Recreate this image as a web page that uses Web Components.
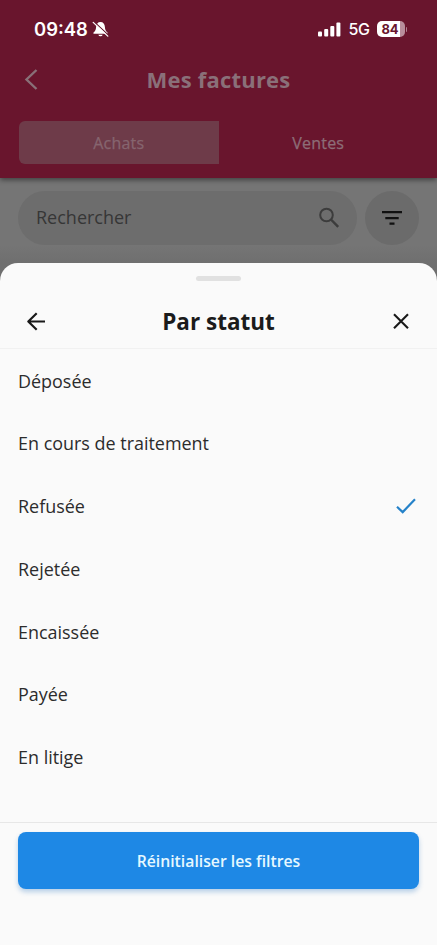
<!DOCTYPE html>
<html lang="fr">
<head>
<meta charset="utf-8">
<title>Mes factures</title>
<style>
html,body{margin:0;height:100%;background:#757575}
body{font-family:"Open Sans","Noto Sans",sans-serif;overflow:hidden}
</style>
</head>
<body>
<invoices-screen></invoices-screen>
<script>
function define(name, html){
  const t=document.createElement('template');
  t.innerHTML=html;
  customElements.define(name, class extends HTMLElement{
    constructor(){super();this.attachShadow({mode:'open'}).appendChild(t.content.cloneNode(true));}
  });
}

define('status-bar', `
<style>
:host{display:flex;align-items:center;box-sizing:border-box;height:58px;padding:0 30px 0 34px;color:#fff;font-family:Inter,sans-serif}
time{font-size:18.4px;font-weight:600;line-height:22px;letter-spacing:0}
svg{display:block;flex:none}
.bell{margin-left:4px}
.signal{margin-left:auto}
.net{font-size:16px;line-height:20px;margin:0 7px;font-weight:500;letter-spacing:-.4px}
.bat{box-sizing:border-box;width:28px;height:16px;border-radius:5px;background:linear-gradient(90deg,#fff 83%,#b88d9b 83%);color:#69152d;font-size:13px;font-weight:700;line-height:16px;padding-left:5px;letter-spacing:-.2px}
.tip{width:1.5px;height:5px;border-radius:0 2px 2px 0;background:#b08191;margin-left:1px}
</style>
<time>09:48</time>
<svg class="bell" width="17" height="17" viewBox="0 0 17 17"><path d="M8.5 1C5.7 1 4.3 3 4.1 6c-.2 2.700-.7 3.800-2.300 5.200-.8.800-.5 1.600.5 1.600h12.400c1 0 1.300-.8.500-1.600-1.600-1.400-2.100-2.500-2.300-5.200C12.700 3 11.300 1 8.500 1zM6.300 13.700a2.300 2.300 0 0 0 4.400 0z" fill="#fff"/><path d="M2 .6 16.400 14.100" stroke="#69152d" stroke-width="1.300"/><path d="M1.200 1.400 15.800 15.100" stroke="#fff" stroke-width="1.300" stroke-linecap="round"/></svg>
<svg class="signal" width="23" height="15" viewBox="0 0 23 15" fill="#fff"><rect x="0" y="9.500" width="4" height="5" rx="1"/><rect x="6.200" y="7" width="4" height="7.500" rx="1"/><rect x="12.300" y="4" width="4" height="10.500" rx="1"/><rect x="18.400" y=".5" width="4" height="14" rx="1"/></svg>
<span class="net">5G</span><span class="bat">84</span><span class="tip"></span>`);

define('app-header', `
<style>
:host{display:block;height:178px;background:#69152d;box-shadow:0 2px 5px rgba(0,0,0,.45);position:relative}
.title{display:grid;grid-template-columns:62px 1fr 62px;align-items:center;height:44px}
h1{margin:0;padding-bottom:2px;text-align:center;font-size:22px;line-height:30px;font-weight:700;letter-spacing:.2px;color:#8a7079}
svg{display:block;margin-left:24px}
</style>
<status-bar></status-bar>
<div class="title"><svg width="16" height="24" viewBox="0 0 16 24"><path d="M12.500 2 2.500 11.500l10 9.500" fill="none" stroke="#897078" stroke-width="2.400"/></svg><h1>Mes factures</h1></div>
<slot></slot>`);

define('tab-strip', `
<style>
:host{display:grid;grid-template-columns:1fr 1fr;height:43px;margin:19px 19px 0;border-radius:6px;overflow:hidden}
::slotted(span){display:flex;align-items:center;justify-content:center;font-size:16px;-webkit-text-stroke:.25px currentColor;line-height:22px;letter-spacing:.2px;color:#8d6d77}
::slotted(.active){background:#6e3b49;color:#86656f}
</style><slot></slot>`);

define('search-row', `
<style>
:host{display:flex;gap:8px;padding:13px 18px 0}
.field{display:flex;align-items:center;justify-content:space-between;box-sizing:border-box;width:339px;height:54px;border-radius:27px;background:#6d6d6d;padding:0 16px 0 18px;color:#363636;font-size:18px;line-height:24px}
.round{display:grid;place-items:center;width:54px;height:54px;border-radius:50%;background:#6b6b6b}
.field span{padding-bottom:2px}
svg{display:block}
</style>
<div class="field"><span><slot></slot></span><svg width="24" height="24" viewBox="0 0 24 24" fill="none" stroke="#3c3c3c" stroke-width="2"><circle cx="9.500" cy="9" r="6.300"/><path d="m14 13.500 7.200 7.400" stroke-width="2.500"/></svg></div>
<div class="round"><svg width="22" height="16" viewBox="0 0 22 16" fill="#111"><path d="M1 1h20v2.300H1zM4.300 7h13.400v2.300H4.300zM8.500 12.500h5v2.300h-5z"/></svg></div>`);

define('filter-sheet', `
<style>
:host{display:flex;flex-direction:column;position:absolute;left:0;right:0;top:263px;bottom:0;background:#fafafa;border-radius:18px 18px 0 0;color:#202020}
.grip{width:45px;height:5px;border-radius:3px;background:#e1e1e1;margin:13px auto 0}
header{display:grid;grid-template-columns:24px 1fr 24px;align-items:center;box-sizing:border-box;height:68px;padding:13px 24px 0;border-bottom:1px solid #f1f1f1}
h2{margin:0;padding-top:1px;text-align:center;font-size:22.500px;line-height:30px;font-weight:700;color:#1b1b1b}
svg{display:block}
.list{box-sizing:border-box;height:473px;padding-top:.3px}
footer{border-top:1px solid #e7e7e7;padding:9px 18px 0}
</style>
<div class="grip"></div>
<header><svg width="24" height="24" viewBox="0 0 24 24" fill="none" stroke="#191919" stroke-width="2.200" stroke-linejoin="round"><path d="M21 12.500H4.500M12.700 4.300 4.300 12.500l8.400 8.200"/></svg><h2><slot name="title"></slot></h2><svg width="24" height="24" viewBox="0 0 24 24" fill="none" stroke="#191919" stroke-width="2.100"><path d="m5 5.300 14 14M19 5.300 5 19.300"/></svg></header>
<div class="list"><slot></slot></div>
<footer><slot name="action"></slot></footer>`);

define('status-option', `
<style>
:host{display:flex;align-items:center;justify-content:space-between;height:62.750px;padding:0 20px 0 18px;font-size:17.950px;line-height:26px;color:#2c2c2c}
svg{display:none}
:host([selected]) svg{display:block}
</style>
<span><slot></slot></span><svg width="22" height="18" viewBox="0 0 22 18"><path d="m2 9.800 5.700 5.300L20 2.300" fill="none" stroke="#2582c9" stroke-width="2.200"/></svg>`);

define('primary-button', `
<style>
:host{display:block}
button{display:block;width:100%;height:57px;border:0;border-radius:8px;background:#1e88e5;color:#e6f8ff;font:600 15.750px/22px "Open Sans","Noto Sans",sans-serif;box-shadow:0 3px 5px rgba(30,110,190,.3);padding:0}
</style><button><slot></slot></button>`);

define('invoices-screen', `
<style>
:host{display:block;position:relative;height:945px;background:linear-gradient(#757575 245px,#6f6f6f 263px);overflow:hidden}
</style>
<app-header><tab-strip><span class="active">Achats</span><span>Ventes</span></tab-strip></app-header>
<search-row>Rechercher</search-row>
<filter-sheet>
<span slot="title">Par statut</span>
<status-option>Déposée</status-option>
<status-option>En cours de traitement</status-option>
<status-option selected>Refusée</status-option>
<status-option>Rejetée</status-option>
<status-option>Encaissée</status-option>
<status-option>Payée</status-option>
<status-option>En litige</status-option>
<primary-button slot="action">Réinitialiser les filtres</primary-button>
</filter-sheet>`);
</script>
</body>
</html>
